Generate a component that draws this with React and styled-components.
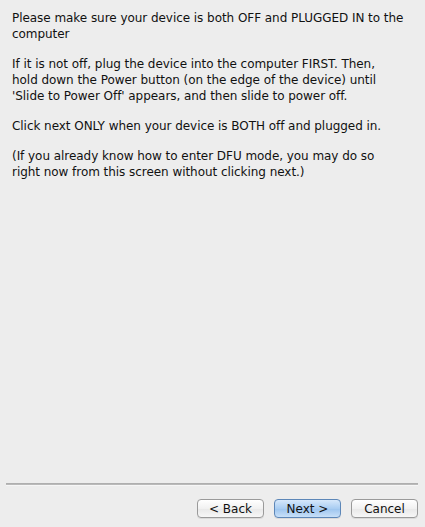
import React from "react";
import styled, { createGlobalStyle } from "styled-components";

const GlobalStyle = createGlobalStyle`
  html, body {
    margin: 0;
    padding: 0;
    background: #ededed;
  }
  body {
    font-family: "DejaVu Sans", "Liberation Sans", sans-serif;
  }
`;

const Window = styled.div`
  width: 425px;
  height: 527px;
  display: flex;
  flex-direction: column;
  background: #ededed;
  box-sizing: border-box;
`;

const Content = styled.div`
  flex: 1;
  padding: 10px 8px 0 12px;
`;

const Para = styled.p`
  margin: 0 0 14px;
  font-size: 12px;
  line-height: 16px;
  letter-spacing: -0.05px;
  color: #111;
  white-space: nowrap;
`;

const Separator = styled.hr`
  margin: 0 7px 0 6px;
  border: 0;
  height: 2px;
  background: linear-gradient(#a9a9a9, #bfbfbf);
  border-bottom: 1px solid #f6f6f6;
`;

const Footer = styled.div`
  display: flex;
  justify-content: flex-end;
  gap: 10px;
  padding: 13px 7px 9px 0;
`;

const Button = styled.button`
  width: 67px;
  height: 19px;
  padding: 0;
  font-family: "DejaVu Sans", "Liberation Sans", sans-serif;
  font-size: 12px;
  color: #111;
  border-radius: 4px;
  border: 1px solid ${(p) => (p.$primary ? "#5d87b8" : "#9a9a9a")};
  background: ${(p) =>
    p.$primary
      ? "linear-gradient(#d6e8fb, #a9cdf2 50%, #9cc4ee 51%, #c8e0f8)"
      : "linear-gradient(#ffffff, #f1f1f1 50%, #e8e8e8 51%, #f7f7f7)"};
  box-shadow: 0 1px 0 rgba(0, 0, 0, 0.08);
`;

const paragraphs = [
  ["Please make sure your device is both OFF and PLUGGED IN to the", "computer"],
  [
    "If it is not off, plug the device into the computer FIRST. Then,",
    "hold down the Power button (on the edge of the device) until",
    "'Slide to Power Off' appears, and then slide to power off.",
  ],
  ["Click next ONLY when your device is BOTH off and plugged in."],
  [
    "(If you already know how to enter DFU mode, you may do so",
    "right now from this screen without clicking next.)",
  ],
];

export default function App() {
  return (
    <Window>
      <GlobalStyle />
      <Content>
        {paragraphs.map((lines, i) => (
          <Para key={i}>
            {lines.map((line, j) => (
              <React.Fragment key={j}>
                {j > 0 && <br />}
                {line}
              </React.Fragment>
            ))}
          </Para>
        ))}
      </Content>
      <Separator />
      <Footer>
        <Button>&lt; Back</Button>
        <Button $primary>Next &gt;</Button>
        <Button>Cancel</Button>
      </Footer>
    </Window>
  );
}
